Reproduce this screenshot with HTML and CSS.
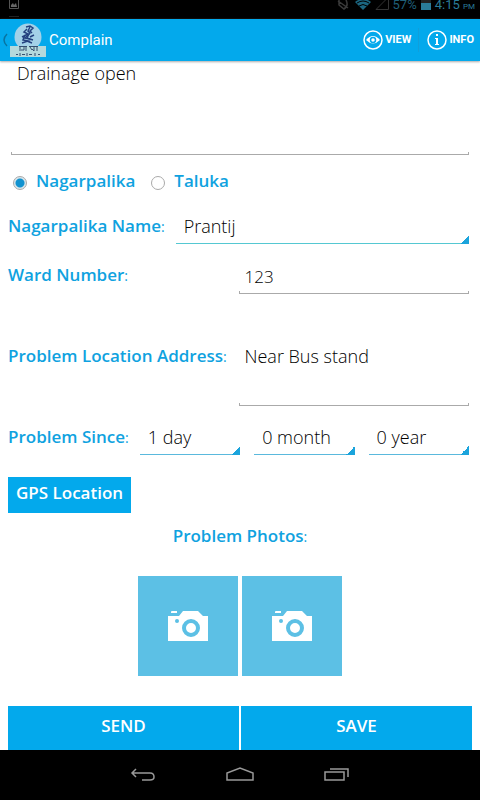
FILE: index.html
```html
<!DOCTYPE html>
<html lang="en">
<head>
    <meta charset="utf-8">
    <meta name="viewport" content="width=device-width, initial-scale=1">
    <title>Complain</title>
    <link rel="stylesheet" href="styles.css">
</head>
<body>

<div class="status-bar">
  <svg class="status-note" width="10" height="19" viewBox="0 0 10 19">
    <path d="M0.500 0V8.500H9.500V0" fill="none" stroke="#555"/>
    <path d="M2 7V5L4 3L5 5L7 3L8 7Z" fill="#666"/>
    <path d="M0 16.500H10" stroke="#222"/>
  </svg>
  <div class="status-right">
    <svg width="14" height="10" viewBox="0 0 14 10" fill="none" stroke="#3a3a3a" stroke-width="1.500">
      <path d="M2 0V5L7 9Q12 6 9 0M1 1L11 8"/>
    </svg>
    <svg width="16" height="10" viewBox="0 0 16 10">
      <path d="M0 2Q8 -4 16 2L8 10Z" fill="#1b6680"/>
      <path d="M2 3Q8 -1 14 3M4 6Q8 3 12 6" fill="none" stroke="#000"/>
    </svg>
    <svg width="14" height="10" viewBox="0 0 14 10">
      <path d="M1 9.500L13.500 -3V9.500Z" fill="none" stroke="#333"/>
    </svg>
    <span class="status-percent">57%</span>
    <svg width="10" height="10" viewBox="0 0 10 10">
      <path d="M0 0H10V3H0Z" fill="#222"/>
      <path d="M0 3H10V10H0Z" fill="#2a7c99"/>
    </svg>
    <span>4:15 <small>PM</small></span>
  </div>
</div>

<header class="action-bar">
  <a href="#" class="up" aria-label="Back">
    <svg width="8" height="14" viewBox="0 0 8 14"><path d="M6 1Q3 4 3 7Q3 10 6 13" fill="none" stroke="#0873a0" stroke-width="1.500"/></svg>
    <svg width="36" height="36" viewBox="0 0 36 36">
      <circle cx="18" cy="15" r="13.500" fill="#a3d1e8"/>
      <path d="M0 24H36V35H0Z" fill="#b4d9dc"/>
      <g fill="none" stroke="#24417f" stroke-width="1.500">
        <path d="M16 5L20 4L23 6L20 9L22 11M17 7L14 10L18 12L12 15M19 12L17 16L23 18M15 13L13 18L18 19L12 21M20 15L24 13M17 19L22 21"/>
        <path d="M20 5L18 9L20 11L15 16L20 17"/>
      </g>
      <g fill="none" stroke="#354f70">
        <path d="M9 24.500H17M10 25V29M14 25V28L11 28M16 25V29M19 24.500H28M20 25L22 28M24 25V29L22 27M27 25V29"/>
        <path d="M6 32.500H8M10 31V34M12 32.500H15M17 31V34M19 32.500H22M25 31V34M28 32.500H30"/>
      </g>
    </svg>
  </a>
  <h1>Complain</h1>
  <button type="button" class="action">
    <svg width="20" height="20" viewBox="0 0 20 20">
      <circle cx="10" cy="10" r="9" fill="none" stroke="#fff" stroke-width="1.500"/>
      <path d="M3 10Q10 2 17 10Q10 17 3 10Z" fill="#fff"/>
      <circle cx="10" cy="10" r="2.500" fill="#fff" stroke="#03a9ec" stroke-width="1.500"/>
    </svg>
    VIEW
  </button>
  <button type="button" class="action">
    <svg width="20" height="20" viewBox="0 0 20 20">
      <circle cx="10" cy="10" r="9" fill="none" stroke="#fff" stroke-width="1.500"/>
      <path d="M9 4H11V6H9ZM8 8H11V14H12V15H8V14H9V9H8Z" fill="#fff"/>
    </svg>
    INFO
  </button>
</header>

<form class="complaint">
  <textarea class="field details" aria-label="Complaint details">Drainage open</textarea>

  <div class="row radios">
    <input type="radio" name="area" id="nagarpalika" checked>
    <label for="nagarpalika">Nagarpalika</label>
    <input type="radio" name="area" id="taluka">
    <label for="taluka">Taluka</label>
  </div>

  <div class="row name-row">
    <label for="city">Nagarpalika Name<i>:</i></label>
    <select id="city" class="teal"><option>Prantij</option></select>
  </div>

  <div class="row split ward-row">
    <label for="ward">Ward Number<i>:</i></label>
    <input type="text" id="ward" class="field" value="123">
  </div>

  <div class="row split">
    <label for="address">Problem Location Address<i>:</i></label>
    <textarea id="address" class="field address">Near Bus stand</textarea>
  </div>

  <div class="row since">
    <label for="days">Problem Since<i>:</i></label>
    <div class="since-fields">
      <select id="days"><option>1 day</option></select>
      <select aria-label="Months"><option>0 month</option></select>
      <select aria-label="Years"><option>0 year</option></select>
    </div>
  </div>

  <button type="button" class="btn gps">GPS Location</button>

  <h2>Problem Photos<i>:</i></h2>
  <div class="photos">
    <button type="button" class="photo" aria-label="Add first photo">
      <svg width="40" height="32" viewBox="0 0 40 32">
        <path d="M3 2Q3 1 4 1H9V3H3ZM0 6H11L15 1H30L35 6H40V31H0Z" fill="#fff"/>
        <circle cx="9" cy="11" r="2" fill="#5cc0e5"/>
        <circle cx="23" cy="18" r="7" fill="#fff" stroke="#5cc0e5" stroke-width="4"/>
      </svg>
    </button>
    <button type="button" class="photo" aria-label="Add second photo">
      <svg width="40" height="32" viewBox="0 0 40 32">
        <path d="M3 2Q3 1 4 1H9V3H3ZM0 6H11L15 1H30L35 6H40V31H0Z" fill="#fff"/>
        <circle cx="9" cy="11" r="2" fill="#5cc0e5"/>
        <circle cx="23" cy="18" r="7" fill="#fff" stroke="#5cc0e5" stroke-width="4"/>
      </svg>
    </button>
  </div>

  <div class="submit">
    <button type="submit" class="btn">SEND</button>
    <button type="button" class="btn">SAVE</button>
  </div>
</form>

<nav class="nav-bar">
  <button type="button" aria-label="Back">
    <svg width="26" height="16" viewBox="0 0 26 16"><path d="M6 2L2 6L6 10M2 6H20Q24 6 24 10Q24 13 20 13H12" fill="none" stroke="#999" stroke-width="1.500"/></svg>
  </button>
  <button type="button" aria-label="Home">
    <svg width="28" height="16" viewBox="0 0 28 16"><path d="M1 13V6L14 1L27 6V13Z" fill="none" stroke="#999" stroke-width="1.500"/></svg>
  </button>
  <button type="button" aria-label="Recent apps">
    <svg width="26" height="16" viewBox="0 0 26 16"><path d="M1 5H20V13H1ZM6 2H24V10" fill="none" stroke="#999" stroke-width="1.500"/></svg>
  </button>
</nav>

</body>
</html>
```

FILE: styles.css
```css
* {
  box-sizing: border-box;
}
body {
  margin: 0;
  min-height: 100vh;
  display: flex;
  flex-direction: column;
  background: #fff;
  color: #111;
  font: 17px/24px "Open Sans", "Noto Sans", sans-serif;
}
button {
  border: 0;
  padding: 0;
  margin: 0;
  background: none;
  font: inherit;
  color: inherit;
}
svg {
  display: block;
  flex: none;
}

/* system status bar */
.status-bar {
  display: flex;
  justify-content: space-between;
  height: 19px;
  padding: 0 5px 0 9px;
  background: #000;
  overflow: hidden;
}
.status-right {
  display: flex;
  align-items: flex-start;
  gap: 4px;
  color: #2a7c99;
  font: 13px/10px Roboto, sans-serif;
}
.status-right small {
  font-size: 8px;
}
.status-percent {
  color: #1f5f78;
}

/* app bar */
.action-bar {
  display: flex;
  align-items: center;
  height: 42px;
  padding-right: 6px;
  background: #03a9ec;
  color: #fff;
  font-family: Roboto, sans-serif;
  box-shadow: 0 1px 2px #aaa;
}
.up {
  display: flex;
  align-items: center;
  gap: 1px;
  padding-left: 1px;
}
.action-bar h1 {
  flex: 1;
  margin: 0 0 0 3px;
  font-size: 15px;
  font-weight: 400;
}
.action {
  display: flex;
  align-items: center;
  gap: 2px;
  font-size: 11px;
  font-weight: 700;
}
.action + .action {
  margin-left: 7px;
  padding-left: 8px;
  border-left: 1px solid #109fdb;
}

/* complaint form */
.complaint {
  flex: 1;
  display: flex;
  flex-direction: column;
  padding: 0 8px;
}
label, h2 {
  color: #0fa2e0;
  font-size: 17px;
  font-weight: 600;
  line-height: 24px;
  white-space: nowrap;
}
label i, h2 i {
  font-size: 14px;
  font-style: normal;
  font-weight: 400;
}
.field, select {
  display: block;
  min-width: 0;
  border: 0;
  border-radius: 0;
  margin: 0;
  outline: 0;
  color: #000;
  font: inherit;
  font-size: 18px;
  font-weight: 300;
}
.field {
  padding: 0 6px;
  resize: none;
  background:
    linear-gradient(#aaa, #aaa) left bottom / 1px 3px no-repeat,
    linear-gradient(#aaa, #aaa) right bottom / 1px 3px no-repeat,
    linear-gradient(#aaa, #aaa) left bottom / 100% 1px no-repeat;
}
.details {
  height: 94px;
  margin: 0 3px;
}
.row {
  display: flex;
}
.radios {
  align-items: center;
  margin-top: 14px;
}
.radios input {
  appearance: none;
  width: 14px;
  height: 14px;
  margin: 4px 9px 0 5px;
  border: 1px solid #aaa;
  border-radius: 50%;
}
.radios input:checked {
  background: radial-gradient(#1192cf 4px, #d8e6ec 5px);
}
.radios label + input {
  margin-left: 16px;
}
.name-row {
  gap: 11px;
  margin-top: 21px;
  padding-right: 3px;
}
select {
  flex: 1;
  appearance: none;
  height: 30px;
  padding: 0 8px 6px;
  background:
    linear-gradient(135deg, transparent 50%, #1ba4dc 50%) right bottom / 9px 9px no-repeat,
    linear-gradient(#5ab9dd, #5ab9dd) left bottom / 100% 1px no-repeat;
}
select.teal {
  background:
    linear-gradient(135deg, transparent 50%, #1ba4dc 50%) right bottom / 9px 9px no-repeat,
    linear-gradient(#55c8d2, #55c8d2) left bottom / 100% 1px no-repeat;
}
.split {
  display: grid;
  grid-template-columns: 1fr 1fr;
  padding-right: 3px;
}
.ward-row {
  margin: 19px 0 50px;
}
.ward-row .field {
  height: 31px;
  padding-bottom: 5px;
  font-size: 17px;
}
.address {
  height: 62px;
}
.since {
  gap: 11px;
  margin-top: 19px;
  padding-right: 3px;
}
.since-fields {
  flex: 1;
  display: flex;
  gap: 14px;
}
.btn {
  background: #03a9ec;
  color: #fff;
  font-weight: 600;
}
.gps {
  align-self: flex-start;
  height: 36px;
  margin-top: 22px;
  padding: 0 8px 4px;
}
h2 {
  margin: 11px 0 27px;
  text-align: center;
}
.photos {
  display: flex;
  justify-content: center;
  gap: 4px;
  margin-bottom: 30px;
}
.photo {
  display: flex;
  align-items: center;
  justify-content: center;
  width: 100px;
  height: 100px;
  background: #5cc0e5;
}
.submit {
  display: flex;
  gap: 2px;
  margin-top: auto;
}
.submit .btn {
  flex: 1;
  height: 44px;
  padding-bottom: 4px;
}

/* system navigation */
.nav-bar {
  display: flex;
  justify-content: center;
  align-items: center;
  gap: 70px;
  height: 50px;
  background: #000;
}
```
